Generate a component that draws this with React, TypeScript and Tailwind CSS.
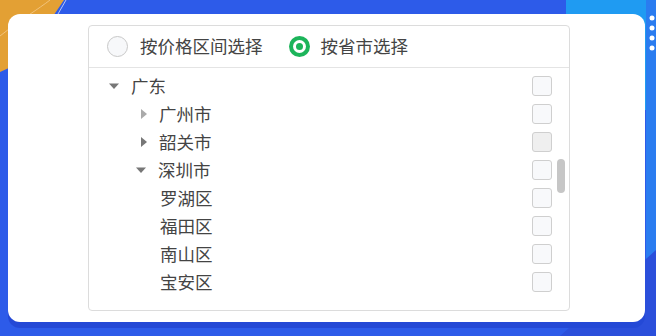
import React from 'react';

type Node = {
  label: string;
  level: number;
  caret?: 'down' | 'right' | 'right-light';
  shaded?: boolean;
};

const rows: Node[] = [
  { label: '广东', level: 0, caret: 'down' },
  { label: '广州市', level: 1, caret: 'right-light' },
  { label: '韶关市', level: 1, caret: 'right', shaded: true },
  { label: '深圳市', level: 1, caret: 'down' },
  { label: '罗湖区', level: 2 },
  { label: '福田区', level: 2 },
  { label: '南山区', level: 2 },
  { label: '宝安区', level: 2 },
];

const Caret: React.FC<{ kind: Node['caret'] }> = ({ kind }) => {
  if (kind === 'down') {
    return (
      <svg width="12" height="12" viewBox="0 0 12 12">
        <path d="M1 3.5h10L6 9z" fill="#777" />
      </svg>
    );
  }
  return (
    <svg width="12" height="12" viewBox="0 0 12 12">
      <path d="M3 1v10l6-5z" fill={kind === 'right' ? '#777' : '#aaa'} />
    </svg>
  );
};

const Background: React.FC = () => (
  <svg className="absolute inset-0" width="656" height="336" viewBox="0 0 656 336">
    <rect width="656" height="336" fill="#2d5be9" />
    <rect x="566" y="0" width="90" height="110" fill="#1f9bf2" />
    <rect x="646" y="0" width="10" height="336" fill="#2a7cf0" />
    <path d="M0 0h64L22 62 0 72z" fill="#e3a034" />
    <path d="M0 36 C20 20 40 8 50 0" stroke="#f1c27a" strokeWidth="1" fill="none" />
    <path d="M66 0 L58 14" stroke="#b8c6f5" strokeWidth="1" fill="none" />
    {[18, 28, 38, 48].map((y) => (
      <circle key={y} cx="652" cy={y} r="2.5" fill="#ffffff" />
    ))}
    <path d="M560 336 L656 250 L656 336z" fill="#2b4fdb" />
  </svg>
);

export default function App() {
  return (
    <div className="relative w-[656px] h-[336px] overflow-hidden" style={{ fontFamily: '"Noto Sans CJK SC", "Noto Sans", sans-serif' }}>
      <Background />
      <div className="relative pt-[14px] pl-[8px]">
        <div className="w-[637px] h-[308px] bg-white rounded-[12px] shadow-[0_6px_0_#2449d6] pt-[11px] pl-[80px]">
          <div className="w-[482px] h-[286px] border border-[#dcdcdc] rounded-[4px] flex flex-col">
            <div className="h-[42px] flex items-center border-b border-[#e4e4e4] pl-[18px] text-[17.5px] text-[#444]">
              <div className="flex items-center gap-[12px]">
                <span className="w-[21px] h-[21px] rounded-full border border-[#c8c8c8] bg-[#f7f8fa]" />
                <span>按价格区间选择</span>
              </div>
              <div className="flex items-center gap-[11px] ml-[26px]">
                <span className="w-[21px] h-[21px] rounded-full bg-[#1cb45a] flex items-center justify-center">
                  <span className="w-[13px] h-[13px] rounded-full bg-white flex items-center justify-center">
                    <span className="w-[7px] h-[7px] rounded-full bg-[#1cb45a]" />
                  </span>
                </span>
                <span>按省市选择</span>
              </div>
            </div>
            <div className="relative flex-1 pt-[4px]">
              {rows.map((r) => (
                <div key={r.label} className="h-[28px] flex items-center text-[17.5px] text-[#444]">
                  <div
                    className={
                      r.level === 0
                        ? 'pl-[19px] flex items-center gap-[11px]'
                        : r.level === 1
                        ? r.caret === 'down'
                          ? 'pl-[46px] flex items-center gap-[11px]'
                          : 'pl-[49px] flex items-center gap-[9px]'
                        : 'pl-[71px] flex items-center'
                    }
                  >
                    {r.caret && <Caret kind={r.caret} />}
                    <span>{r.label}</span>
                  </div>
                  <span
                    className={
                      'ml-auto mr-[17px] w-[20px] h-[20px] rounded-[3px] border border-[#cfcfcf] ' +
                      (r.shaded ? 'bg-[#efefef]' : 'bg-[#f8f9fb]')
                    }
                  />
                </div>
              ))}
              <div className="absolute right-[4px] top-[91px] w-[8px] h-[34px] rounded-full bg-[#c6c6c6]" />
            </div>
          </div>
        </div>
      </div>
    </div>
  );
}
